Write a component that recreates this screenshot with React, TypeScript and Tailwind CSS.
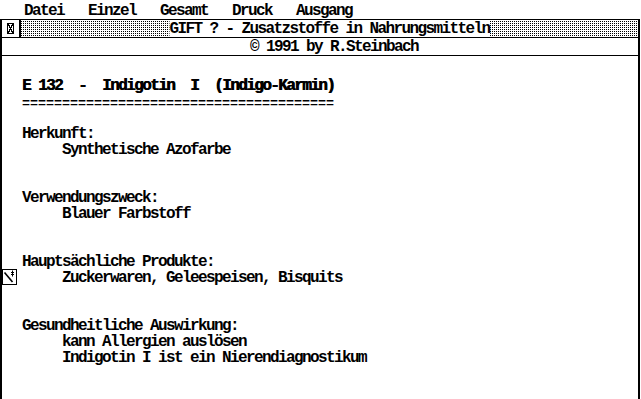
import React from "react";

function Dots() {
  return (
    <svg className="block w-full h-full" aria-hidden>
      <defs>
        <pattern id="gemdots" width="2" height="2" patternUnits="userSpaceOnUse">
          <rect x="0" y="1" width="1" height="1" fill="#000" />
        </pattern>
      </defs>
      <rect width="100%" height="100%" fill="url(#gemdots)" />
    </svg>
  );
}

function CloseGlyph() {
  return (
    <svg width="7" height="11" viewBox="0 0 7 11" shapeRendering="crispEdges" className="block">
      <rect x="0.5" y="0.5" width="6" height="10" fill="none" stroke="#000" />
      <path d="M1 1 L6 10 M6 1 L1 10" stroke="#000" strokeWidth="1.4" />
    </svg>
  );
}

const lines = [
  "E 132  -  Indigotin  I  (Indigo-Karmin)",
  "=======================================",
  "",
  "Herkunft:",
  "     Synthetische Azofarbe",
  "",
  "",
  "Verwendungszweck:",
  "     Blauer Farbstoff",
  "",
  "",
  "Hauptsächliche Produkte:",
  "     Zuckerwaren, Geleespeisen, Bisquits",
  "",
  "",
  "Gesundheitliche Auswirkung:",
  "     kann Allergien auslösen",
  "     Indigotin I ist ein Nierendiagnostikum",
];

export default function App() {
  return (
    <div className="relative w-[641px] h-[399px] overflow-hidden bg-white text-black font-['Liberation_Mono',monospace] font-bold text-[16px] leading-[16px] tracking-[-1.6px]">
      {/* menu bar */}
      <div className="h-[19px] pt-[3px] whitespace-pre">   Datei   Einzel   Gesamt   Druck   Ausgang</div>

      {/* window */}
      <div className="flex flex-col w-[640px] h-[380px] border-t border-l-2 border-r-2 border-black">
        <div className="flex h-[18px] border-b border-black">
          <div className="w-[19px] border-r-2 border-black flex items-center justify-center pr-[1px]">
            <CloseGlyph />
          </div>
          <div className="flex-1">
            <Dots />
          </div>
          <div className="w-[320px] h-[17px] bg-white whitespace-pre pt-[3px] leading-[13px]">GIFT ? - Zusatzstoffe in Nahrungsmitteln</div>
          <div className="flex-1">
            <Dots />
          </div>
        </div>
        <div className="h-[18px] border-b border-black whitespace-pre pl-[248px] pt-[2px] leading-[15px]">© 1991 by R.Steinbach</div>

        <div className="flex-1 pt-[22px] pl-[20px]">
          {lines.map((l, i) => (
            <div
              key={i}
              className={
                i === 0
                  ? "h-[16px] whitespace-pre [text-shadow:0.6px_0_0_#000]"
                  : i === 1
                    ? "h-[16px] whitespace-pre text-[13.333px] tracking-normal pt-[2px]"
                    : "h-[16px] whitespace-pre"
              }
            >
              {l}
            </div>
          ))}
        </div>
      </div>

      {/* stray icon over the left edge */}
      <div className="absolute left-[2px] top-[269px] w-[15px] h-[16px] border border-black bg-white">
        <svg viewBox="0 0 13 14" className="block w-[13px] h-[14px]">
          <path d="M1.5 2.5 L9.5 12" stroke="#000" strokeWidth="1.6" fill="none" />
          <path d="M8 2 L11 5 M11 2 L8 5 M9.5 0.5 L9.5 6.5" stroke="#000" strokeWidth="1" fill="none" />
        </svg>
      </div>
    </div>
  );
}
